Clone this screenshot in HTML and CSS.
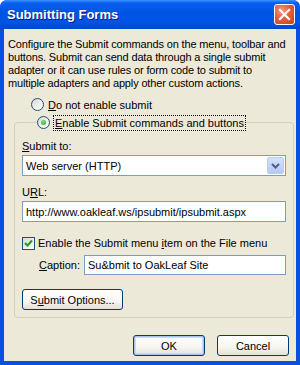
FILE: index.html
```html
<!DOCTYPE html>
<html lang="en">
<head>
  <meta charset="UTF-8" />
  <title>Submitting Forms</title>
  <link rel="stylesheet" href="styles.css">
</head>
<body>
  <div class="window">
    <div class="titlebar">
      <span class="title">Submitting Forms</span>
      <span class="close">
        <svg width="13" height="13" viewBox="0 0 13 13"><path d="M2 2 L11 11 M11 2 L2 11" stroke="#fff" stroke-width="2.2" stroke-linecap="square"/></svg>
      </span>
    </div>

    <div class="client">
      <p class="intro">Configure the Submit commands on the menu, toolbar and<br>buttons. Submit can send data through a single submit<br>adapter or it can use rules or form code to submit to<br>multiple adapters and apply other custom actions.</p>

      <label class="radio-row">
        <span class="radio"></span>
        <span><u>D</u>o not enable submit</span>
      </label>

      <fieldset class="group">
        <legend>
          <label class="radio-row">
            <span class="radio checked"></span>
            <span class="focus"><u>E</u>nable Submit commands and buttons</span>
          </label>
        </legend>

        <div class="field-label first"><u>S</u>ubmit to:</div>
        <div class="textbox select">
          <span>Web server (HTTP)</span>
          <span class="drop">
            <svg width="9" height="6" viewBox="0 0 9 6"><path d="M1 1 L4.5 4.5 L8 1" fill="none" stroke="#4d6185" stroke-width="2"/></svg>
          </span>
        </div>

        <div class="field-label">U<u>R</u>L:</div>
        <div class="textbox">http://www.oakleaf.ws/ipsubmit/ipsubmit.aspx</div>

        <label class="check-row">
          <span class="checkbox">
            <svg width="9" height="9" viewBox="0 0 9 9"><path d="M1 4 L3.5 6.5 L8 1.5" fill="none" stroke="#21a121" stroke-width="2.2"/></svg>
          </span>
          <span>Enable the Submit menu <u>i</u>tem on the File menu</span>
        </label>

        <div class="caption-row">
          <span class="caption-label"><u>C</u>aption:</span>
          <div class="textbox caption">Su&amp;bmit to OakLeaf Site</div>
        </div>

        <button class="btn options">S<u>u</u>bmit Options...</button>
      </fieldset>

      <div class="actions">
        <button class="btn default">OK</button>
        <button class="btn">Cancel</button>
      </div>
    </div>
  </div>
</body>
</html>
```

FILE: styles.css
```css
* { box-sizing: border-box; }
body {
  margin: 0;
  width: 300px;
  height: 365px;
  overflow: hidden;
  font-family: 'Liberation Sans', Arial, sans-serif;
  font-size: 11px;
  color: #000;
  background: #fff;
}
u { text-decoration: underline; }

.window {
  width: 300px;
  height: 365px;
  display: flex;
  flex-direction: column;
  background: #0a50e0;
  border-radius: 7px 7px 0 0;
  overflow: hidden;
}
.titlebar {
  height: 29px;
  flex: none;
  display: flex;
  align-items: center;
  justify-content: space-between;
  padding: 0 5px 0 7px;
  background: linear-gradient(#3d95ff 0%, #0a5ff0 10%, #0055e5 40%, #0054e3 75%, #0046cf 100%);
}
.title {
  color: #fff;
  font-weight: bold;
  font-size: 13px;
  text-shadow: 1px 1px 0 #0a1883;
  padding-bottom: 1px;
}
.close {
  width: 21px;
  height: 21px;
  border: 1px solid #fff;
  border-radius: 3px;
  background: radial-gradient(circle at 35% 30%, #f29a7c 0%, #e0603a 45%, #c8421b 100%);
  display: flex;
  align-items: center;
  justify-content: center;
}

.client {
  flex: 1;
  margin: 0 4px 4px;
  background: #ece9d8;
  padding: 9px 4px 0 4px;
  display: flex;
  flex-direction: column;
}
.intro {
  margin: 0;
  line-height: 13px;
  white-space: nowrap;
  letter-spacing: -0.15px;
}

.radio-row {
  display: flex;
  align-items: center;
  gap: 4px;
  height: 17px;
}
.client > .radio-row {
  margin: 6px 0 1px 23px;
}
.radio {
  width: 13px;
  height: 13px;
  border: 1px solid #1c5180;
  border-radius: 50%;
  background: linear-gradient(135deg, #dcd9cd, #fff);
  display: flex;
  align-items: center;
  justify-content: center;
}
.radio.checked::after {
  content: "";
  width: 5px;
  height: 5px;
  border-radius: 50%;
  background: radial-gradient(circle at 40% 35%, #7ee07e, #21a121);
}
.focus {
  outline: 1px dotted #000;
  padding: 0 1px;
  line-height: 14px;
}

.group {
  margin: 0 0 0 6px;
  width: 280px;
  border: 1px solid #d0d0bf;
  border-radius: 4px;
  padding: 0 7px 7px;
  display: flex;
  flex-direction: column;
}
.group legend {
  padding: 0 1px 0 0;
  margin-left: 15px;
}

.field-label {
  line-height: 13px;
  margin: 10px 0 2px;
}
.field-label.first { margin-top: 9px; }
.textbox {
  height: 21px;
  border: 1px solid #7f9db9;
  background: #fff;
  padding: 0 3px;
  display: flex;
  align-items: center;
  white-space: nowrap;
}
.select {
  justify-content: space-between;
  padding-right: 1px;
}
.drop {
  width: 17px;
  height: 17px;
  border-radius: 2px;
  background: linear-gradient(#d3e1fc, #b5c9f6);
  border: 1px solid #b9ccf5;
  display: flex;
  align-items: center;
  justify-content: center;
}

.check-row {
  display: flex;
  align-items: center;
  gap: 3px;
  margin-top: 14px;
  height: 14px;
}
.checkbox {
  width: 13px;
  height: 13px;
  border: 1px solid #1c5180;
  background: linear-gradient(135deg, #dcd9cd, #fff);
  display: flex;
  align-items: center;
  justify-content: center;
}

.caption-row {
  display: flex;
  align-items: center;
  margin-top: 5px;
  padding-left: 17px;
  gap: 4px;
}
.caption-label { width: 41px; flex: none; }
.caption { flex: 1; height: 20px; }

.btn {
  font-family: inherit;
  font-size: 11px;
  color: #000;
  height: 21px;
  width: 72px;
  border: 1px solid #003c74;
  border-radius: 3px;
  background: linear-gradient(#fff 0%, #f6f5f0 60%, #e3e0d4 100%);
  padding: 0;
}
.options {
  width: 101px;
  margin-top: 14px;
  align-self: flex-start;
}
.default {
  box-shadow: inset 0 0 0 1px #a9c2ee, inset 0 0 0 2px #cddaf5;
}

.actions {
  display: flex;
  justify-content: flex-end;
  gap: 12px;
  margin-top: 17px;
  padding-right: 3px;
}
```
